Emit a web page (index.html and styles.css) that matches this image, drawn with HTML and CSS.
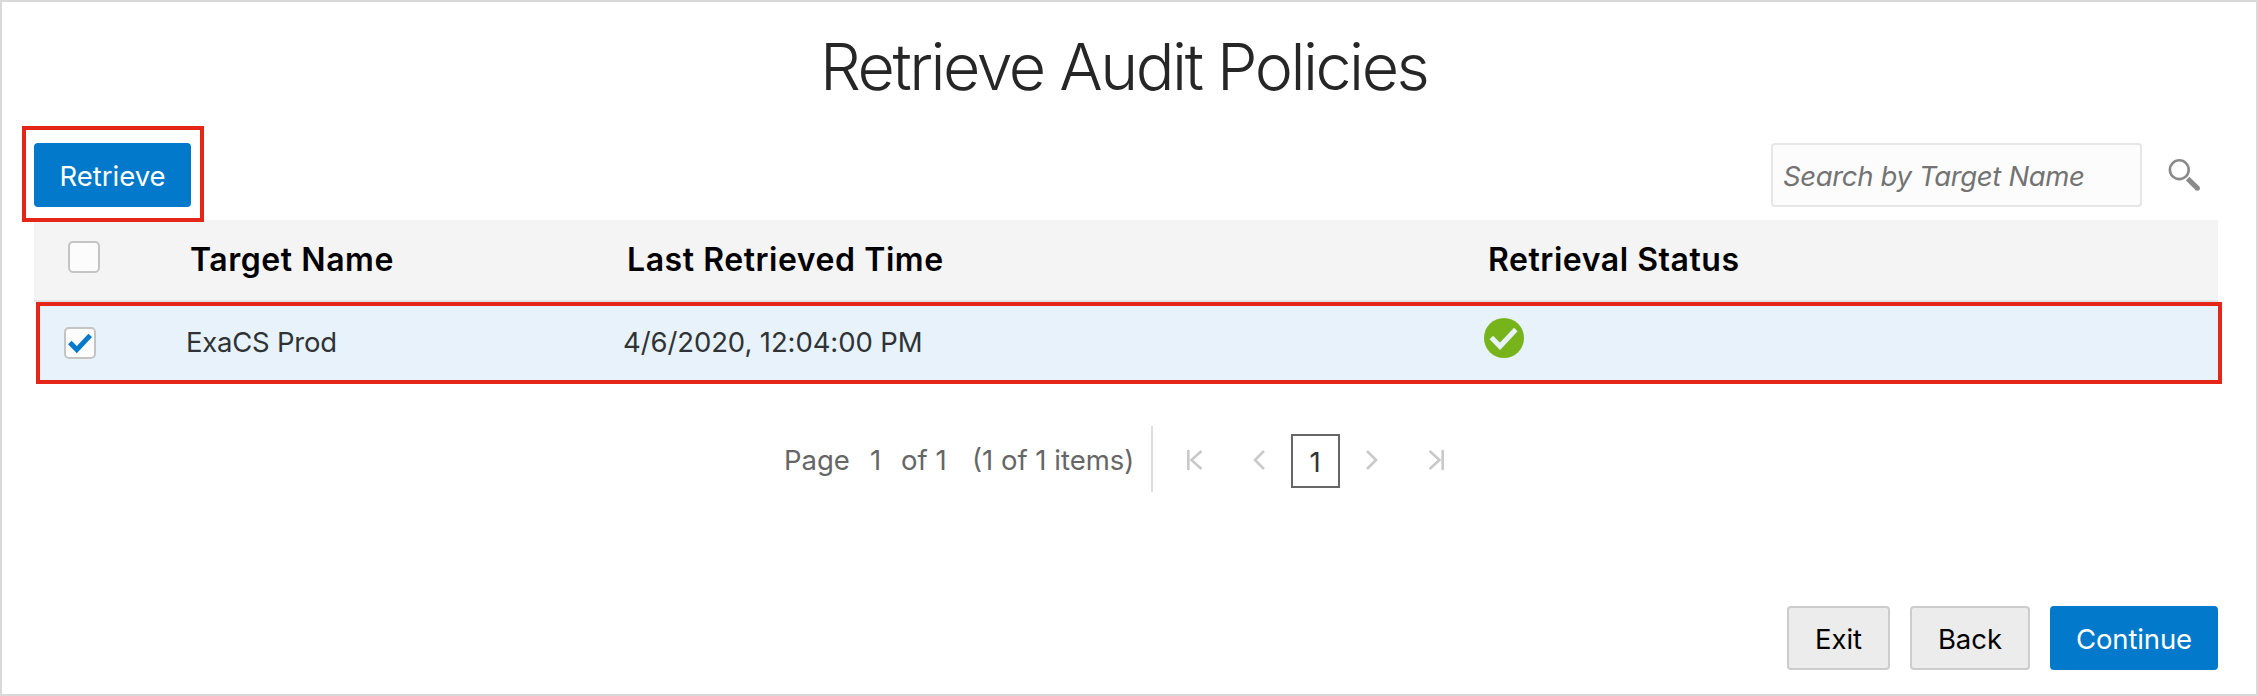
FILE: index.html
```
<!DOCTYPE html>
<html lang="en">
<head>
<meta charset="utf-8">
<title>Retrieve Audit Policies</title>
<link rel="stylesheet" href="styles.css">
</head>
<body>
<main class="dialog">
  <h1 class="title">Retrieve Audit Policies</h1>
  <div class="toolbar">
    <div class="highlight"><button class="btn primary retrieve">Retrieve</button></div>
    <div class="search">
      <div class="search-box">Search by Target Name</div>
      <svg class="search-icon" width="36" height="36" viewBox="0 0 36 36" fill="none" stroke="#8a8a8a"><circle cx="13.3" cy="12.7" r="9.4" stroke-width="2.6"/><path d="M21.6 21.6L31.6 31.4" stroke-width="5"/><circle cx="31.4" cy="31.2" r="2.5" fill="#8a8a8a" stroke="none"/></svg>
    </div>
  </div>
  <section class="table">
    <div class="row head">
      <span class="checkbox"></span>
      <span class="c1">Target Name</span>
      <span class="c2">Last Retrieved Time</span>
      <span class="c3">Retrieval Status</span>
    </div>
    <div class="row selected">
      <span class="checkbox"><svg width="28" height="28" viewBox="0 0 28 28" fill="none" stroke="#0579cb" stroke-width="5"><path d="M3.8 13.5L10.8 20.6L24.2 6.4"/></svg></span>
      <span class="c1 name">ExaCS Prod</span>
      <span class="c2 time">4/6/2020, 12:04:00 PM</span>
      <span class="c3"><svg class="ok" width="40" height="40" viewBox="0 0 40 40"><circle cx="20" cy="20" r="20" fill="#77b41b"/><path d="M7.3 19.5L16 28.3L31.8 11.5" fill="none" stroke="#e7f2fa" stroke-width="5"/></svg></span>
    </div>
  </section>
  <nav class="pager">
    <span class="p-page">Page</span>
    <span class="p-num">1</span>
    <span class="p-of">of 1</span>
    <span class="p-items">(1 of 1 items)</span>
    <span class="divider"></span>
    <svg class="nav first" width="16" height="20" viewBox="0 0 16 20"><path d="M1.3 0V20M14.5 1L4.5 10L14.5 19"/></svg>
    <svg class="nav prev" width="12" height="20" viewBox="0 0 12 20"><path d="M11 1L2 10L11 19"/></svg>
    <span class="current">1</span>
    <svg class="nav next" width="12" height="20" viewBox="0 0 12 20"><path d="M1 1L10 10L1 19"/></svg>
    <svg class="nav last" width="16" height="20" viewBox="0 0 16 20"><path d="M14.7 0V20M1.5 1L11.5 10L1.5 19"/></svg>
  </nav>
  <footer class="actions">
    <button class="btn exit">Exit</button>
    <button class="btn back">Back</button>
    <button class="btn primary continue">Continue</button>
  </footer>
</main>
</body>
</html>
```
FILE: styles.css
```
* { box-sizing: border-box; }
body { margin: 0; font-family: Inter, "Liberation Sans", sans-serif; background: #fff; }
.dialog { width: 2258px; height: 696px; border: 2px solid #d9d9d9; overflow: hidden; }
.title { margin: 25px 0 0; height: 80px; line-height: 80px; font-size: 64.5px; font-weight: 350; letter-spacing: -2.5px; color: #262626; white-space: nowrap; padding-left: 818px; }
.toolbar { display: flex; justify-content: space-between; align-items: flex-start; height: 96px; margin-top: 19px; padding: 0 54px 0 20px; }
.highlight { width: 182px; height: 96px; border: 4px solid #e32618; padding: 13px 8px; position: relative; z-index: 1; }
.btn { display: block; height: 64px; padding: 2px 0 0; border: 2px solid #ccc; border-radius: 4px; background: #ececec; color: #000; font: 400 27.5px/58px Inter, "Liberation Sans", sans-serif; white-space: nowrap; }
.primary { background: #0279cb; border-color: #0279cb; color: #fff; }
.retrieve { width: 157px; }
.search { display: flex; margin-top: 17px; }
.search-box { width: 371px; height: 64px; border: 2px solid #e6e6e6; border-radius: 4px; background: #fcfcfc; color: #737373; font: italic 400 27.5px/62px Inter, "Liberation Sans", sans-serif; letter-spacing: -0.35px; padding-left: 10px; white-space: nowrap; }
.search-icon { margin: 14px 0 0 24px; }
.table { margin: -2px 38px 0 32px; white-space: nowrap; }
.row { display: flex; align-items: flex-start; position: relative; }
.head { height: 82px; background: #f4f4f4; border-bottom: 2px solid #e1e5e6; font-size: 32px; font-weight: 600; letter-spacing: 0.55px; line-height: 79px; color: #000; padding-left: 34px; }
.selected { width: 2186px; height: 82px; margin-left: 2px; border: 4px solid #e32618; background: #e7f2fa; font-size: 27.5px; line-height: 73px; color: #2f3335; padding-left: 24px; }
.name { letter-spacing: -0.25px; }
.time { letter-spacing: -0.1px; }
.checkbox { flex: none; width: 32px; height: 32px; border: 2px solid #c4c4c4; border-radius: 5px; background: #fcfcfc; display: block; margin-top: 21px; }
.checkbox svg { display: block; }
.c1 { width: 437px; margin-left: 90px; }
.c2 { width: 861px; }
.ok { display: block; margin-top: 12px; }
.pager { display: flex; align-items: center; height: 66px; margin-top: 42px; padding-left: 782px; font-size: 27.5px; line-height: 66px; color: #666; white-space: nowrap; }
.p-page, .p-num, .p-of, .p-items { padding-top: 2px; }
.p-page { width: 86px; } .p-num { width: 31px; } .p-of { width: 71px; } .p-items { width: 179px; }
.divider { width: 2px; height: 66px; background: #ddd; }
.nav { fill: none; stroke: #c9c9c9; stroke-width: 2.6; margin-top: 2px; }
.first { margin-left: 34px; } .prev { margin-left: 50px; } .next { margin-left: 26px; } .last { margin-left: 50px; }
.current { width: 49px; height: 54px; margin: 4px 0 0 26px; border: 2px solid #666; color: #333; text-align: center; line-height: 52px; padding-right: 1px; }
.actions { display: flex; justify-content: flex-end; gap: 20px; margin-top: 114px; padding-right: 38px; }
.exit { width: 103px; } .back { width: 120px; } .continue { width: 168px; letter-spacing: -0.15px; }
```
